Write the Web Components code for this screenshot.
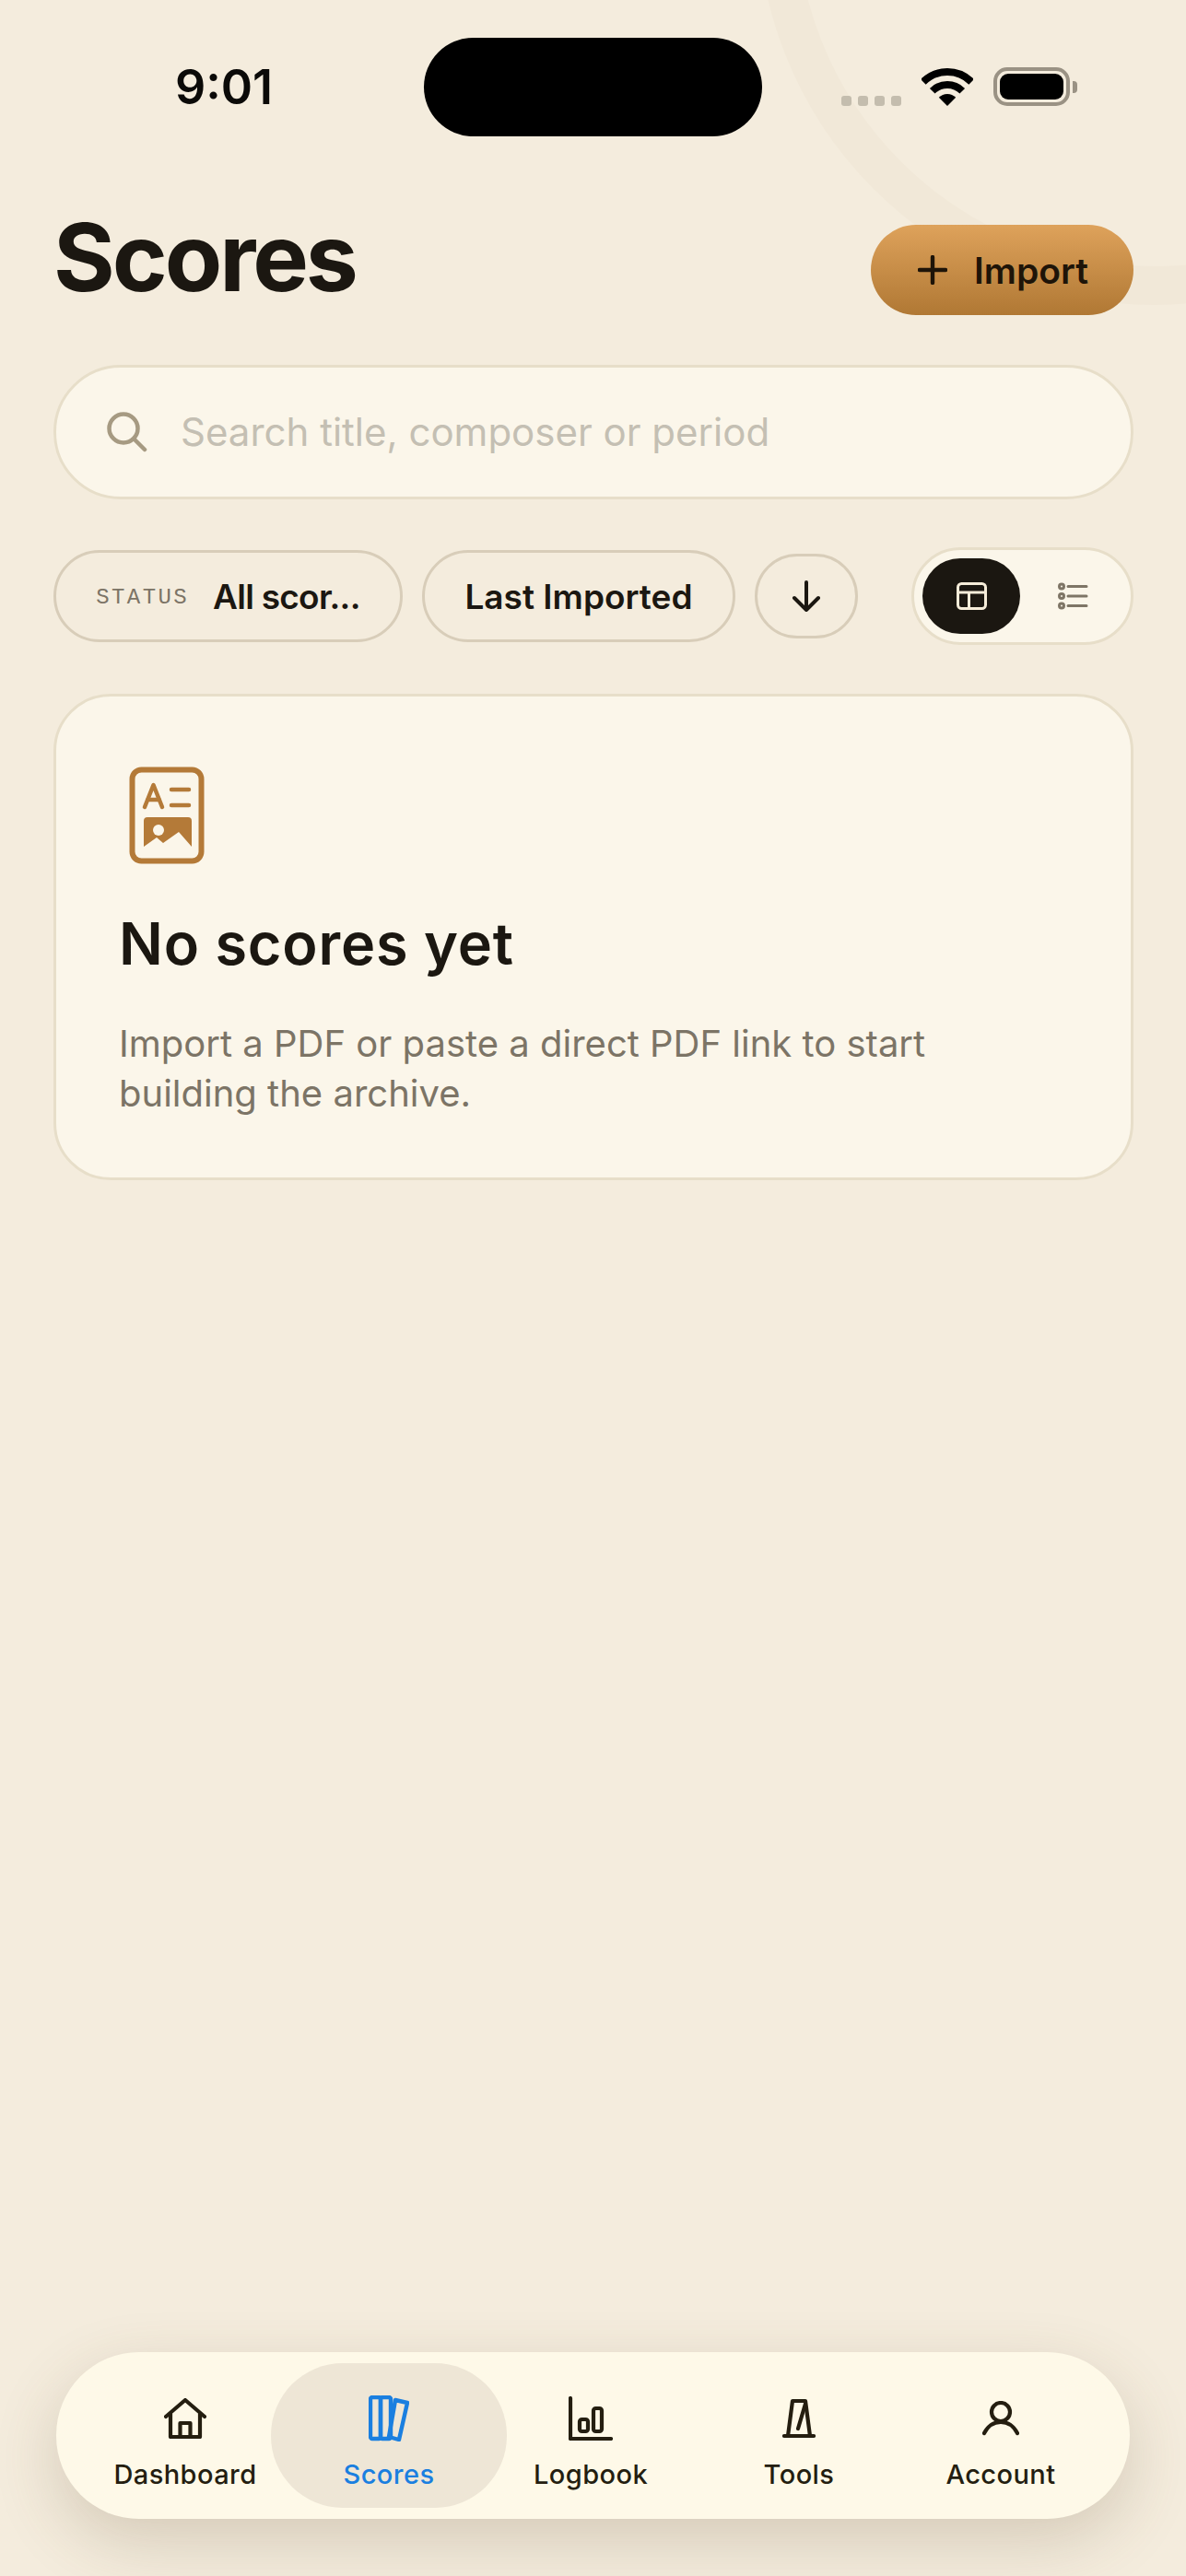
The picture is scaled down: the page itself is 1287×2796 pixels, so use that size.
<!DOCTYPE html>
<html lang="en">
<head>
<meta charset="utf-8">
<title>Scores</title>
<style>
    :root {
        --bg: #f4ecdd;
        --ink: #1b1711;
        --card: #fbf6ea;
        --line: #e7dec9;
        --muted: #7c7466;
        --accent: #b47a38;
        --blue: #1a7fe0;
        --sans: Inter, "Liberation Sans", sans-serif;
    }
    html, body { margin: 0; height: 100%; background: var(--bg); }
    body { font-family: var(--sans); color: var(--ink); }
    svg { display: block; }
</style>
</head>
<body>
<score-app>
    <status-bar></status-bar>
    <page-header title="Scores">
        <import-button>Import</import-button>
    </page-header>
    <search-field placeholder="Search title, composer or period"></search-field>
    <filter-bar>
        <filter-pill label="STATUS" width="379">All scor...</filter-pill>
        <filter-pill width="340">Last Imported</filter-pill>
        <sort-button></sort-button>
        <view-toggle></view-toggle>
    </filter-bar>
    <empty-card heading="No scores yet">Import a PDF or paste a direct PDF link to start building the archive.</empty-card>
    <bottom-nav>
        <nav-item>
            <svg slot="icon" width="46" height="44" viewBox="0 0 46 44" fill="none" stroke="#241e10" stroke-width="4.200" stroke-linecap="round" stroke-linejoin="round">
                <path d="M2 20 23 2l21 18"/><path d="M7 17v25h32V17"/><path d="M17.500 42V27h11v15"/>
            </svg>
            Dashboard
        </nav-item>
        <nav-item active>
            <svg slot="icon" width="44" height="50" viewBox="0 0 44 50" fill="none" stroke="currentColor" stroke-width="4.400" stroke-linejoin="round">
                <rect x="2" y="2" width="11" height="45" rx="2"/><rect x="13" y="2" width="11" height="45" rx="2"/><path d="M29 5l13 3-9 40-11-3z"/>
            </svg>
            Scores
        </nav-item>
        <nav-item>
            <svg slot="icon" width="48" height="48" viewBox="0 0 48 48" fill="none" stroke="#241e10" stroke-width="4.200" stroke-linecap="round" stroke-linejoin="round">
                <path d="M2 2v44h44"/><rect x="12" y="25" width="9" height="13" rx="2.500"/><rect x="27" y="13" width="9" height="25" rx="2.500"/>
            </svg>
            Logbook
        </nav-item>
        <nav-item>
            <svg slot="icon" width="36" height="44" viewBox="0 0 36 44" fill="none" stroke="#241e10" stroke-width="4.200" stroke-linecap="round" stroke-linejoin="round">
                <path d="M2 41h32"/><path d="M6 41 11 3h14l5 38"/><path d="M17 33 25 6"/>
            </svg>
            Tools
        </nav-item>
        <nav-item>
            <svg slot="icon" width="40" height="38" viewBox="0 0 40 38" fill="none" stroke="#241e10" stroke-width="4.200" stroke-linecap="round">
                <circle cx="20" cy="12" r="10"/><path d="M2 35c4-8 10-12 18-12s14 4 18 12"/>
            </svg>
            Account
        </nav-item>
    </bottom-nav>
</score-app>

<script>
class ScoreApp extends HTMLElement {
    constructor() {
        super();
        this.attachShadow({ mode: 'open' });
        this.shadowRoot.innerHTML = `
            <style>
                :host {
                    display: flex;
                    flex-direction: column;
                    position: relative;
                    box-sizing: border-box;
                    height: 2796px;
                    padding-bottom: 62px;
                    overflow: hidden;
                    background: var(--bg);
                }
                .ring {
                    position: absolute;
                    left: 822px;
                    top: -529px;
                    width: 860px;
                    height: 860px;
                    box-sizing: border-box;
                    border: 42px solid #f1e8d8;
                    border-radius: 50%;
                }
                .content {
                    position: relative;
                    display: flex;
                    flex-direction: column;
                    flex: 1;
                }
            </style>
            <div class="ring"></div>
            <div class="content"><slot></slot></div>
        `;
    }
}

class StatusBar extends HTMLElement {
    constructor() {
        super();
        this.attachShadow({ mode: 'open' });
        this.shadowRoot.innerHTML = `
            <style>
                :host { display: flex; align-items: center; padding-top: 41px; height: 107px; }
                .time {
                    width: 434px;
                    padding-left: 26px;
                    text-align: center;
                    font: 600 52px/1 var(--sans);
                    color: #0b0a08;
                }
                .island { width: 367px; height: 107px; background: #000; border-radius: 54px; }
                .icons { display: flex; align-items: flex-end; margin-left: 86px; margin-top: -2px; }
                .dots { display: flex; gap: 7px; margin-right: 22px; }
                .dots i { width: 11px; height: 11px; border-radius: 3px; background: #c4bdae; }
                .battery {
                    position: relative;
                    box-sizing: border-box;
                    width: 83px;
                    height: 42px;
                    margin-left: 22px;
                    padding: 3px;
                    border: 4px solid #9a9284;
                    border-radius: 15px;
                }
                .battery div { height: 100%; background: #000; border-radius: 9px; }
                .battery::after {
                    content: '';
                    position: absolute;
                    left: 82px;
                    top: 11px;
                    width: 5px;
                    height: 13px;
                    background: #9a9284;
                    border-radius: 0 4px 4px 0;
                }
            </style>
            <div class="time">9:01</div>
            <div class="island"></div>
            <div class="icons">
                <div class="dots"><i></i><i></i><i></i><i></i></div>
                <svg width="56" height="41" viewBox="0 0 56 41" fill="none" stroke="#000" stroke-width="8">
                    <path d="M1.840 14.840A37 37 0 0 1 54.160 14.840"/>
                    <path d="M11.740 24.740A23 23 0 0 1 44.260 24.740"/>
                    <path d="M28 41 18.800 31.800A13 13 0 0 1 37.200 31.800Z" fill="#000" stroke="none"/>
                </svg>
                <div class="battery"><div></div></div>
            </div>
        `;
    }
}

class PageHeader extends HTMLElement {
    constructor() {
        super();
        this.attachShadow({ mode: 'open' });
        this.shadowRoot.innerHTML = `
            <style>
                :host {
                    display: flex;
                    justify-content: space-between;
                    align-items: center;
                    margin: 96px 57px 54px 58px;
                    height: 98px;
                }
                h1 {
                    margin: 0;
                    padding-bottom: 28px;
                    font: 700 102px/1 var(--sans);
                    letter-spacing: -0.03em;
                    color: var(--ink);
                }
            </style>
            <h1>${this.getAttribute('title')}</h1>
            <slot></slot>
        `;
    }
}

class ImportButton extends HTMLElement {
    constructor() {
        super();
        this.attachShadow({ mode: 'open' });
        this.shadowRoot.innerHTML = `
            <style>
                :host {
                    display: flex;
                    align-items: center;
                    gap: 29px;
                    box-sizing: border-box;
                    width: 285px;
                    height: 98px;
                    padding-left: 51px;
                    border-radius: 49px;
                    background: linear-gradient(#dea25b, #b07834);
                    font: 600 39px/1 var(--sans);
                    color: #1e1408;
                }
            </style>
            <svg width="32" height="32" viewBox="0 0 32 32" stroke="#1e1408" stroke-width="4.400" stroke-linecap="round">
                <path d="M16 2v28M2 16h28"/>
            </svg>
            <slot></slot>
        `;
    }
}

class SearchField extends HTMLElement {
    constructor() {
        super();
        this.attachShadow({ mode: 'open' });
        this.shadowRoot.innerHTML = `
            <style>
                :host {
                    display: flex;
                    align-items: center;
                    gap: 36px;
                    box-sizing: border-box;
                    height: 146px;
                    margin: 0 57px 0 58px;
                    padding-left: 55px;
                    background: var(--card);
                    border: 3px solid var(--line);
                    border-radius: 73px;
                    font: 400 42px/1 var(--sans);
                    color: #c4bfb3;
                }
            </style>
            <svg width="44" height="44" viewBox="0 0 44 44" fill="none" stroke="#a69a82" stroke-width="4.500" stroke-linecap="round">
                <circle cx="18" cy="18" r="15.500"/><path d="M30 30l11 11"/>
            </svg>
            <span>${this.getAttribute('placeholder')}</span>
        `;
    }
}

class FilterBar extends HTMLElement {
    constructor() {
        super();
        this.attachShadow({ mode: 'open' });
        this.shadowRoot.innerHTML = `
            <style>
                :host {
                    display: flex;
                    align-items: center;
                    gap: 21px;
                    height: 106px;
                    margin: 52px 57px 53px 58px;
                }
            </style>
            <slot></slot>
        `;
    }
}

class FilterPill extends HTMLElement {
    constructor() {
        super();
        const label = this.getAttribute('label');
        this.attachShadow({ mode: 'open' });
        this.shadowRoot.innerHTML = `
            <style>
                :host {
                    display: flex;
                    align-items: center;
                    justify-content: center;
                    gap: 26px;
                    box-sizing: border-box;
                    width: ${this.getAttribute('width')}px;
                    height: 100px;
                    border: 3px solid #d8cdb9;
                    border-radius: 50px;
                    font: 600 37px/1 var(--sans);
                    color: var(--ink);
                    white-space: nowrap;
                }
                :host([label]) { letter-spacing: -0.02em; }
                .label {
                    margin-top: 3px;
                    font: 400 24px/1 "Liberation Mono", monospace;
                    letter-spacing: 0.1em;
                    color: var(--muted);
                }
            </style>
            ${label ? `<span class="label">${label}</span>` : ''}
            <span><slot></slot></span>
        `;
    }
}

class SortButton extends HTMLElement {
    constructor() {
        super();
        this.attachShadow({ mode: 'open' });
        this.shadowRoot.innerHTML = `
            <style>
                :host {
                    display: flex;
                    align-items: center;
                    justify-content: center;
                    box-sizing: border-box;
                    width: 112px;
                    height: 92px;
                    border: 3px solid #d8cdb9;
                    border-radius: 46px;
                }
            </style>
            <svg width="32" height="34" viewBox="0 0 32 34" fill="none" stroke="#1b1711" stroke-width="4" stroke-linecap="round" stroke-linejoin="round">
                <path d="M16 2v30M3 19l13 13 13-13"/>
            </svg>
        `;
    }
}

class ViewToggle extends HTMLElement {
    constructor() {
        super();
        this.attachShadow({ mode: 'open' });
        this.shadowRoot.innerHTML = `
            <style>
                :host {
                    display: flex;
                    align-items: center;
                    box-sizing: border-box;
                    width: 241px;
                    height: 106px;
                    margin-left: auto;
                    padding-left: 9px;
                    background: var(--card);
                    border: 3px solid var(--line);
                    border-radius: 53px;
                }
                .on {
                    display: flex;
                    align-items: center;
                    justify-content: center;
                    width: 106px;
                    height: 82px;
                    background: #1b1711;
                    border-radius: 41px;
                }
                .off { display: flex; justify-content: center; width: 106px; margin-left: 4px; }
            </style>
            <div class="on">
                <svg width="33" height="30" viewBox="0 0 33 30" fill="none" stroke="#f5ecd9" stroke-width="3">
                    <rect x="1.500" y="1.500" width="30" height="27" rx="4"/><path d="M1.500 11h30M13.500 11v18"/>
                </svg>
            </div>
            <div class="off">
                <svg width="33" height="30" viewBox="0 0 33 30" fill="none" stroke="#7e7566" stroke-width="3" stroke-linecap="round">
                    <circle cx="4" cy="4.500" r="2.500"/><circle cx="4" cy="15" r="2.500"/><circle cx="4" cy="25.500" r="2.500"/>
                    <path d="M11 4.500h20M11 15h20M11 25.500h20"/>
                </svg>
            </div>
        `;
    }
}

class EmptyCard extends HTMLElement {
    constructor() {
        super();
        this.attachShadow({ mode: 'open' });
        this.shadowRoot.innerHTML = `
            <style>
                :host {
                    display: block;
                    box-sizing: border-box;
                    height: 528px;
                    margin: 0 57px 0 58px;
                    padding: 76px 68px 0;
                    background: var(--card);
                    border: 3px solid var(--line);
                    border-radius: 62px;
                }
                svg { display: block; margin-left: 11px; }
                h2 {
                    margin: 50px 0 0;
                    font: 600 63px/72px var(--sans);
                    letter-spacing: 0.8px;
                    color: var(--ink);
                }
                p {
                    margin: 46px 0 0;
                    width: 920px;
                    font: 400 40px/54px var(--sans);
                    color: var(--muted);
                }
            </style>
            <svg width="82" height="106" viewBox="0 0 82 106">
                <rect x="3.500" y="3.500" width="75" height="99" rx="10" fill="none" stroke="#b47a38" stroke-width="6"/>
                <path d="M17 44 26.500 20 36 44M20 36h13M46 25h19M46 42h19" fill="none" stroke="#b47a38" stroke-width="4.500" stroke-linecap="round" stroke-linejoin="round"/>
                <path d="M16 59a4 4 0 0 1 4-4h44a4 4 0 0 1 4 4v28L54 71 37 83l-7-6-14 10z" fill="#b47a38"/>
                <circle cx="32" cy="69" r="6" fill="#fbf6ea"/>
            </svg>
            <h2>${this.getAttribute('heading')}</h2>
            <p><slot></slot></p>
        `;
    }
}

class BottomNav extends HTMLElement {
    constructor() {
        super();
        this.attachShadow({ mode: 'open' });
        this.shadowRoot.innerHTML = `
            <style>
                :host {
                    display: grid;
                    grid-template-columns: 186px 256px 182px 270px 168px;
                    align-items: center;
                    box-sizing: border-box;
                    height: 181px;
                    margin: auto 61px 0 61px;
                    padding-left: 47px;
                    background: #fef9e8;
                    border-radius: 90px;
                    box-shadow: 0 24px 70px rgba(90, 70, 40, 0.2);
                }
            </style>
            <slot></slot>
        `;
    }
}

class NavItem extends HTMLElement {
    constructor() {
        super();
        this.attachShadow({ mode: 'open' });
        this.shadowRoot.innerHTML = `
            <style>
                :host {
                    display: flex;
                    flex-direction: column;
                    align-items: center;
                    box-sizing: border-box;
                    height: 157px;
                    padding-top: 36px;
                    border-radius: 78px;
                    font: 500 29px/36px var(--sans);
                    letter-spacing: 0.015em;
                    color: #241e10;
                }
                :host([active]) { background: #eee6d6; color: var(--blue); }
                .icon { display: flex; align-items: center; height: 48px; margin-bottom: 19px; }
            </style>
            <div class="icon"><slot name="icon"></slot></div>
            <slot></slot>
        `;
    }
}

customElements.define('score-app', ScoreApp);
customElements.define('status-bar', StatusBar);
customElements.define('page-header', PageHeader);
customElements.define('import-button', ImportButton);
customElements.define('search-field', SearchField);
customElements.define('filter-bar', FilterBar);
customElements.define('filter-pill', FilterPill);
customElements.define('sort-button', SortButton);
customElements.define('view-toggle', ViewToggle);
customElements.define('empty-card', EmptyCard);
customElements.define('bottom-nav', BottomNav);
customElements.define('nav-item', NavItem);
</script>
</body>
</html>
